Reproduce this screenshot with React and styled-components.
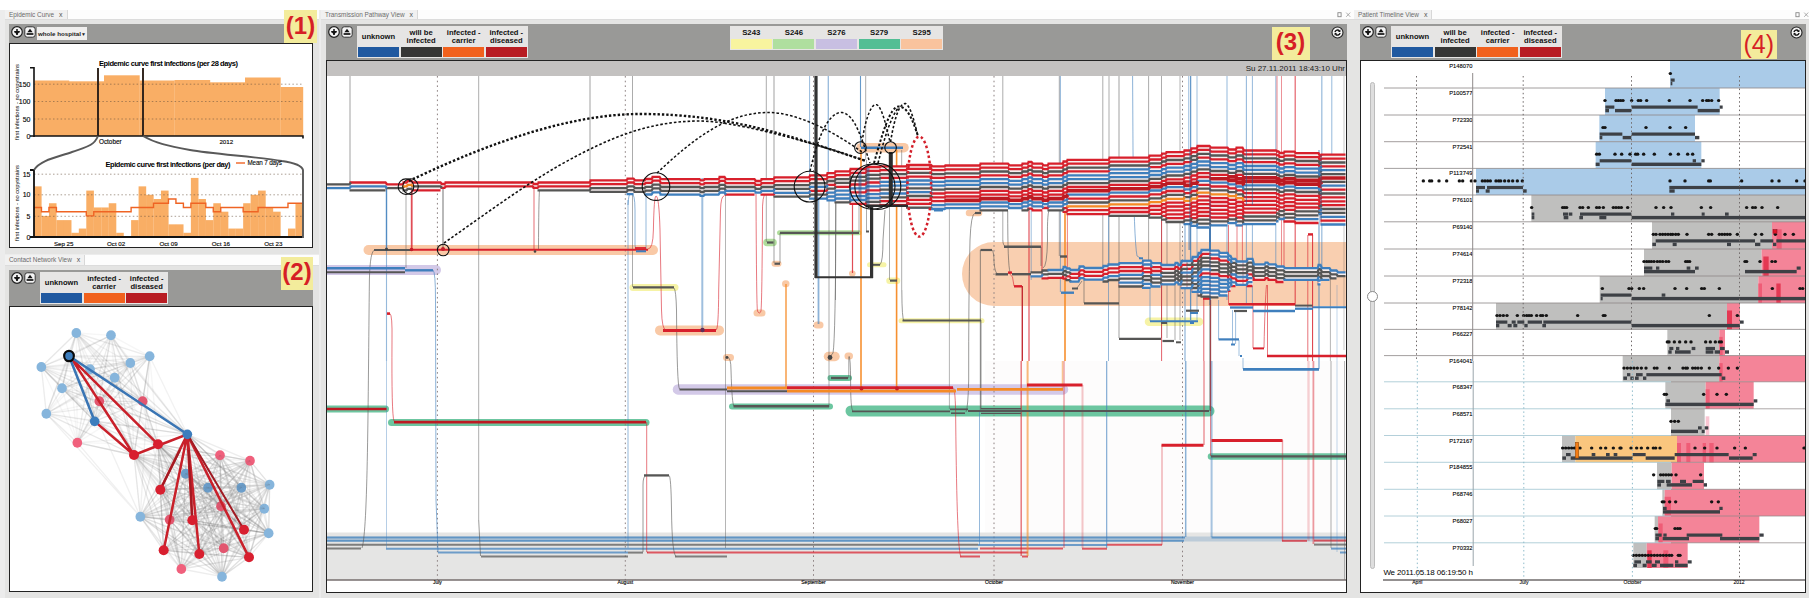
import React from "react";
import styled, { createGlobalStyle } from "styled-components";

const GlobalStyle = createGlobalStyle`
  html, body { margin: 0; padding: 0; background: #fff; overflow: hidden; }
  * { box-sizing: border-box; }
  body { font-family: "Liberation Sans", Arial, sans-serif; color: #1c1c1c; }
  svg text { font-family: "Liberation Sans", Arial, sans-serif; }
`;

const Workspace = styled.main`
  display: flex;
  gap: 2px;
  width: 1809px;
  height: 598px;
  padding: 10px 0 0 5px;
  background: linear-gradient(#fff 10px, #ececec 10px);
`;
const Column = styled.div`
  display: flex;
  flex-direction: column;
  gap: 1px;
  flex: none;
  width: ${(p) => p.$width}px;
  margin-left: ${(p) => p.$pull || 0}px;
`;
const Panel = styled.section`
  position: relative;
  display: flex;
  flex-direction: column;
  height: ${(p) => p.$height}px;
`;
const TabRow = styled.header`
  display: flex;
  justify-content: space-between;
  height: ${(p) => p.$height}px;
  background: #fdfdfd;
`;
const Tab = styled.div`
  display: flex;
  align-items: center;
  gap: 5px;
  height: 100%;
  padding: 0 4px;
  background: #f1f1f1;
  border-right: 1px solid #d8d8d8;
  color: #6b6b6b;
  font-size: 6.4px;
  line-height: 8px;
  white-space: nowrap;
`;
const TabClose = styled.span`
  color: #555;
  font-size: 7px;
`;
const WindowButtons = styled.div`
  display: flex;
  align-items: center;
  padding-right: ${(p) => p.$inset}px;
`;
const Body = styled.div`
  flex: 1;
  display: flex;
  flex-direction: column;
  padding: 5px ${(p) => p.$right}px 5px ${(p) => p.$left}px;
  background: #e4e4e3;
  border-top: 1px solid #dcdcdc;
  padding-top: 4px;
`;
const Toolbar = styled.div`
  display: flex;
  align-items: flex-start;
  height: ${(p) => p.$height}px;
  padding: ${(p) => p.$top || 2}px 3px 0 2px;
  background: #999997;
`;
const Buttons = styled.div`
  display: flex;
  gap: 1px;
`;
const Select = styled.div`
  display: flex;
  align-items: center;
  justify-content: space-between;
  width: 50px;
  height: 13px;
  margin: 1px 0 0 1px;
  padding: 0 2px 0 1px;
  background: #f0efee;
  font-weight: bold;
  font-size: 6.2px;
  white-space: nowrap;
`;
const Arrow = styled.span`
  font-size: 5px;
`;
const Legend = styled.div`
  display: flex;
  gap: 1.6px;
  height: ${(p) => p.$height}px;
  margin-left: ${(p) => p.$offset}px;
  padding: 1px 1px 1px 1px;
  background: #e6e5e4;
`;
const LegendItem = styled.div`
  display: flex;
  flex-direction: column;
  width: 41px;
`;
const LegendLabel = styled.div`
  flex: 1;
  display: flex;
  align-items: center;
  justify-content: center;
  text-align: center;
  white-space: pre-line;
  font-weight: bold;
  font-size: ${(p) => p.$size}px;
  line-height: 8.5px;
  color: #111;
`;
const Swatch = styled.div`
  height: 10px;
  background: ${(p) => p.$color};
`;
const RefreshSlot = styled.div`
  margin-left: auto;
`;
const Frame = styled.div`
  display: flex;
  flex-direction: ${(p) => p.$direction || "column"};
  height: ${(p) => p.$height}px;
  border: 1px solid #222;
  background: #fff;
`;
const Chart = styled.svg`
  display: block;
  flex: none;
`;
const TimeStrip = styled.div`
  display: flex;
  align-items: center;
  justify-content: flex-end;
  height: 15px;
  padding-right: 1px;
  background: #c3c1c0;
  font-size: 8px;
  line-height: 15px;
  color: #1a1a1a;
`;
const SliderColumn = styled.div`
  width: 22px;
  padding: 21px 0 0 9px;
`;
const Track = styled.div`
  position: relative;
  width: 5px;
  height: 487px;
  border: 1px solid #bcbcbc;
  border-radius: 3px;
  background: #dedede;
`;
const Thumb = styled.div`
  position: absolute;
  top: 208px;
  left: -4px;
  width: 11px;
  height: 11px;
  border: 1px solid #8a8a8a;
  border-radius: 50%;
  background: #fff;
`;
const Badge = styled.div`
  position: absolute;
  left: ${(p) => p.$x}px;
  top: ${(p) => p.$y}px;
  width: ${(p) => p.$w}px;
  height: ${(p) => p.$h}px;
  background: #f3ec9c;
  color: #d61f26;
  font-size: ${(p) => p.$size || 24}px;
  font-weight: ${(p) => (p.$light ? 400 : 700)};
  line-height: ${(p) => p.$h - (p.$lift || 0)}px;
  text-align: center;
  white-space: nowrap;
`;

const RoundButton = () => (
  <svg width="12" height="12" viewBox="0 0 12 12">
    <circle cx="6" cy="6" r="5.3" fill="#f4f4f4" stroke="#222" strokeWidth="1.2" />
    <path d="M6 3v6M3.2 5.8h5.6" stroke="#111" strokeWidth="1.5" />
    <path d="M3.8 6h4.4L6 9z" fill="#111" />
  </svg>
);
const ExportButton = () => (
  <svg width="12" height="12" viewBox="0 0 12 12">
    <rect x=".8" y=".8" width="10.4" height="10.4" rx="2.5" fill="#f4f4f4" stroke="#333" strokeWidth="1" />
    <path d="M6 2.8l2.6 3.5H3.4z" fill="#111" />
    <path d="M2.6 8h6.8" stroke="#111" strokeWidth="1.7" />
  </svg>
);
const RefreshButton = () => (
  <svg width="13" height="13" viewBox="0 0 13 13" style={{ display: "block" }}>
    <circle cx="6.5" cy="6.5" r="5.5" fill="#f2f2f2" stroke="#222" strokeWidth="1.1" />
    <path d="M4 6.1a2.5 2.5 0 0 1 4.4-1.2M9 7a2.5 2.5 0 0 1-4.4 1.2" fill="none" stroke="#111" strokeWidth="1.4" />
    <path d="M9.4 3.6v2.5H7zM3.6 9.4V7H6z" fill="#111" />
  </svg>
);
const WindowIcons = () => (
  <svg width="14" height="8" viewBox="0 0 14 8">
    <rect x=".9" y="1.7" width="3.2" height="4" fill="none" stroke="#888" strokeWidth=".9" />
    <path d="M9.2 1.6l4 4.2M13.2 1.6l-4 4.2" stroke="#999" strokeWidth=".8" />
  </svg>
);

const STATUS = [
  ["unknown", "#2059a0"],
  ["will be\ninfected", "#363635"],
  ["infected -\ncarrier", "#f1611d"],
  ["infected -\ndiseased", "#b81c22"],
];
const SITES = [
  ["S243", "#f8f49f"],
  ["S246", "#afdf9f"],
  ["S276", "#c8bfe2"],
  ["S279", "#52be94"],
  ["S295", "#f9c39d"],
];

const ColorLegend = ({ items, offset, height, size = 7.6 }) => (
  <Legend $offset={offset} $height={height}>
    {items.map(([label, color]) => (
      <LegendItem key={label}>
        <LegendLabel $size={size}>{label}</LegendLabel>
        <Swatch $color={color} />
      </LegendItem>
    ))}
  </Legend>
);

/* ---------- Epidemic curve ---------- */

const MONTHLY = [
  [34.5, 69, 80.5], [69, 104, 81.3], [104, 139.5, 75.3], [139.5, 174.5, 80.5],
  [174.5, 210, 80], [210, 245, 82.3], [245, 280.5, 77.5], [280.5, 303, 87],
];
const DAILY = [12, 5, 8, 4, 4, 1, 2, 11, 7, 7, 8, 1, 0, 4, 12, 10, 9, 11, 3, 3, 1, 14, 9, 4, 8, 6, 2, 2, 8, 10, 11, 7, 6, 0, 2, 8];
const MEAN = [7, 6, 7, 6, 6, 6, 6, 5, 6, 6, 6, 6, 6, 7, 7, 7, 8, 8, 9, 8, 7, 8, 8, 7, 6, 7, 7, 7, 6, 6, 7, 7, 7, 7, 8, 8];
const dayX = (i) => 34 + i * 7.47;
const dayY = (v) => 237 - v * 4.22;

const EpidemicChart = () => (
  <Chart width="302" height="203" viewBox="10 44 302 203" fontSize="7">
    {MONTHLY.map(([a, b, y]) => (
      <rect key={a} x={a} y={y} width={b - a + 0.2} height={136 - y} fill="#f9ae65" />
    ))}
    <g stroke="#6b5440" strokeWidth=".8" strokeDasharray="1.5 2.3" opacity=".7">
      <path d="M34 84.2H303M34 101.5H303M34 119H303" />
    </g>
    <path d="M30 67.8h4V137M30 136h273v2.5" fill="none" stroke="#111" strokeWidth="1.6" />
    <path d="M98 68v68M143 68v68" stroke="#2c2019" strokeWidth="1.9" />
    <text x="168.5" y="66" textAnchor="middle" fontWeight="bold" textLength="139" fontSize="7.5">Epidemic curve first infections (per 28 days)</text>
    <g textAnchor="end" stroke="#1c1c1c" strokeWidth=".15">
      <text x="30.5" y="86.5">150</text>
      <text x="30.5" y="104">100</text>
      <text x="30.5" y="121.5">50</text>
      <text x="30.5" y="138.5">0</text>
    </g>
    <text x="110.3" y="144.3" textAnchor="middle" fontSize="6.4" stroke="#1c1c1c" strokeWidth=".15">October</text>
    <text x="226.3" y="144.3" textAnchor="middle" fontSize="6.2" stroke="#1c1c1c" strokeWidth=".15">2012</text>
    <text transform="translate(18.6 102) rotate(-90)" textAnchor="middle" textLength="76" fontSize="5.8">first infections - no copystrains</text>

    {DAILY.map((v, i) => (
      <rect key={i} x={dayX(i)} y={dayY(v)} width="7.6" height={237 - dayY(v)} fill="#f9ae65" />
    ))}
    <path d="M34 174.2H303M34 194.8H303M34 216.3H303" stroke="#6b5440" strokeWidth=".8" strokeDasharray="1.5 2.3" opacity=".7" />
    <path
      d={MEAN.map((v, i) => `${i ? "V" : `M${dayX(0)} `}${dayY(v)}H${dayX(i + 1)}`).join("")}
      fill="none" stroke="#ef6424" strokeWidth="1.4"
    />
    <path d="M30 170h4V238M30 237h273" fill="none" stroke="#111" strokeWidth="1.8" />
    <path d="M98 136C94 146 86 147 72 152S40 160 34 170M143 136C155 143 168 146 190 150S260 157 282 161C296 163 302 166 303 170V238" fill="none" stroke="#595959" strokeWidth="1.9" />
    <text x="168" y="167.2" textAnchor="middle" fontWeight="bold" textLength="125" fontSize="7.4">Epidemic curve first infections (per day)</text>
    <path d="M236 163h9" stroke="#ef6424" strokeWidth="1.4" />
    <text x="247.5" y="165.3" textLength="34.5" fontSize="6.3" stroke="#1c1c1c" strokeWidth=".1">Mean 7 days</text>
    <g textAnchor="end" stroke="#1c1c1c" strokeWidth=".15">
      <text x="30.5" y="176.8">15</text>
      <text x="30.5" y="197.3">10</text>
      <text x="30.5" y="218.8">5</text>
      <text x="30.5" y="239.5">0</text>
    </g>
    <text transform="translate(18.6 203) rotate(-90)" textAnchor="middle" textLength="76" fontSize="5.8">first infections - no copystrains</text>
    <g textAnchor="middle" fontSize="6.2" stroke="#1c1c1c" strokeWidth=".15">
      {["Sep 25", "Oct 02", "Oct 09", "Oct 16", "Oct 23"].map((t, i) => (
        <text key={t} x={63.7 + i * 52.4} y="246">{t}</text>
      ))}
    </g>
  </Chart>
);

/* ---------- Contact network (chart units are thirds of a pixel) ---------- */

const WARD_A = [[229, 249], [333, 256], [207, 318], [449, 319], [124, 351], [270, 358], [391, 339], [344, 383], [186, 415], [298, 454], [428, 454], [139, 491], [284, 514], [232, 578], [402, 615], [474, 583], [562, 553]];
const WARD_B = [[562, 553], [557, 671], [481, 719], [624, 713], [724, 713], [660, 616], [750, 632], [809, 704], [793, 776], [663, 769], [509, 809], [577, 811], [421, 800], [732, 839], [806, 850], [491, 901], [598, 912], [671, 895], [747, 922], [544, 957], [666, 980], [402, 615], [474, 583]];
const NODE_COLORS = {
  lightBlue: ["#86b5dc", [[229, 249], [333, 256], [449, 319], [124, 351], [186, 415], [139, 491], [421, 800], [809, 704], [793, 776], [806, 850], [666, 980], [270, 358], [391, 339], [344, 383]]],
  midBlue: ["#6b9ecb", [[557, 671], [624, 713], [724, 713]]],
  pink: ["#f0607c", [[232, 578], [660, 616], [750, 632], [544, 957]]],
  midPink: ["#e2566f", [[298, 454], [428, 454], [663, 769], [509, 809], [671, 895]]],
};
const meshPath = (nodes) => {
  let d = "";
  nodes.forEach((a, i) => nodes.slice(i + 1).forEach((b) => { d += `M${a[0]} ${a[1]}L${b[0]} ${b[1]}`; }));
  return d;
};
const meshLines = (nodes, op) =>
  nodes.flatMap((a, i) => nodes.slice(i + 1).map((b, j) => (
    <path key={`${i}-${j}`} d={`M${a[0]} ${a[1]}L${b[0]} ${b[1]}`} opacity={op * (1 + ((i * 7 + j * 5) % 4) * 0.6)} />
  )));

const NetworkChart = () => (
  <Chart width="302" height="284" viewBox="10 307 302 284">
    <g transform="translate(0 250) scale(.33333)" fill="none">
      <g stroke="#555" strokeWidth="4">
        {meshLines(WARD_A, 0.05)}
        {meshLines(WARD_B, 0.065)}
        <path opacity=".09" d="M232 578L421 800M232 578L402 615M139 491L421 800M449 319L421 800M402 615L421 800M207 318L421 800M284 514L557 671M428 454L509 809M298 454L481 719" />
      </g>
      <path d={meshPath(WARD_B.slice(1, 12))} stroke="#fff" strokeWidth="1.5" opacity=".35" />
      {Object.values(NODE_COLORS).map(([color, nodes]) => (
        <g key={color} fill={color}>
          {nodes.map(([x, y]) => <ellipse key={x} cx={x} cy={y} rx="14.5" ry="15" />)}
        </g>
      ))}
      <path d={meshPath(WARD_B.slice(1, 12))} stroke="#555" strokeWidth="3" opacity=".06" />
      <g stroke="#c9202a" strokeWidth="7.5">
        <path d="M214 325L402 615M214 325L474 583M284 514L402 615L562 553L481 719M562 553L491 901M562 553L577 811M562 553L598 912M562 553L747 922" />
        <path d="M562 553L732 839M566 600L577 811M540 600L481 719" stroke="#a11a22" strokeWidth="6" />
      </g>
      <path d="M207 318L284 514M207 318L562 553" stroke="#3a75b4" strokeWidth="7.5" />
      <g fill="#d81f2f">
        {[[402, 615], [474, 583], [481, 719], [577, 811], [732, 839], [491, 901], [598, 912], [747, 922]].map(([x, y]) => (
          <ellipse key={x} cx={x} cy={y} rx="15" ry="15" />
        ))}
      </g>
      <g fill="#3c7dbd">
        <circle cx="284" cy="514" r="14.5" />
        <circle cx="562" cy="553" r="14.5" />
        <ellipse cx="207" cy="318" rx="14.5" ry="15.5" stroke="#0a0a0a" strokeWidth="6.5" />
      </g>
    </g>
  </Chart>
);

/* ---------- Transmission pathways ---------- */

const INK = { r: "#d8202c", k: "#565655", b: "#3f7fbd", o: "#f58a25", d: "#bd1a22" };
const STEP = 3.88;

const MAIN_STREAM = [
  [326, 350, 184.3, "kb"], [350, 386, 182.5, "rbk"], [386, 403, 184.3, "rk"], [403, 407, 182.5, "rok"],
  [407, 412, 181, "rok"], [412, 441, 182.5, "rkr"], [441, 445, 184, "rr"], [445, 533, 182.5, "rr"],
  [533, 538, 184, "rr"], [538, 590, 182.5, "rrk"], [590, 627, 180.3, "rrkk"], [627, 634, 178.6, "rrkkb"],
  [634, 645, 180.3, "rrkk"], [645, 652, 179, "rrkkb"], [652, 660, 176.8, "rrkkb"], [660, 700, 179.2, "rrkkb"],
  [700, 704, 180.4, "rrkkb"], [704, 719, 179.2, "rrkkb"], [719, 725, 177, "rrkkb"], [725, 755, 179.2, "rrkbr"],
  [755, 761, 181, "rrkb"], [761, 774, 179.2, "rrkbr"], [774, 809.5, 177.3, "rrkkbk"], [809.5, 827, 175.3, "rrkbrkb"],
  [827, 835, 173.2, "rrkrkbbb"], [835, 850, 171.3, "rrkkrbbbk"], [850, 866, 169, "rrkkrbrbbr"],
  [866, 880, 167, "rrkkrbrbbkr"], [880, 906.5, 166.3, "rrkrbbkbkrr"], [906.5, 931.5, 165, "rrkrbbkbkrrk"],
  [931.5, 945, 166.3, "rrkrbbkrrrbb"], [945, 980, 165.5, "rrkrbbkrrdbb"], [980, 1008.5, 163.7, "rrkrbbkrrdbbk"],
  [1008.5, 1022, 165.3, "rrkrbbkrrdbb"], [1022, 1028, 163.7, "rrkrbbkrrdbbk"], [1028, 1032, 162, "rrkrbbkrrdbbr"],
  [1032, 1042.5, 163.7, "rrkrbbkrrdbbr"], [1042.5, 1048, 165.3, "rrkrbbkrrdbr"], [1048, 1063, 163.7, "rrkrbbkrrdbbk"],
  [1063, 1067, 161.5, "rrkrbbkrrdbbrr"], [1067, 1109, 159.8, "rrkrbbkrdbrkorr"], [1109, 1149, 157.7, "rrkbbbkrdbrkorrk"],
  [1149, 1161.5, 155.6, "rrkrbbkrdbrkorrrk"], [1161.5, 1166, 153.7, "rrkrbbkrdbrkorrrrk"],
  [1166, 1184, 152.2, "rrkrbbkrdbrkorrrrrk"], [1184, 1191, 150.5, "rrkrbbkrrdbrkorrrrkb"],
  [1191, 1197, 148.3, "rrkkbbkrrdbrkorrrrrkb"], [1197, 1210, 146, "rrkrbbkrrbrkorrrrrrkkb"],
  [1210, 1228, 147.7, "rrkrbbkrdbrkorrrrrrkb"], [1228, 1236, 149.5, "rrkrbbkddbrkorrrrrkb"],
  [1236, 1243, 147.7, "rrkrbbkrddbrkorrrrrkb"], [1243, 1276.5, 150.5, "rrkrbbkddbkrrrrrrkkb"],
  [1276.5, 1279, 151.5, "rrkrbbkddbkrrrrrkkb"], [1279, 1284, 153, "rrkrbbkddbkrrrrkkb"],
  [1284, 1295, 151.7, "rrkrbbkddbkrrrrrkkr"], [1295, 1319, 153.2, "rrkrbbkddbkrrrrkkbr"],
  [1319, 1321, 156, "rrkbkkddrkrrrkbb"], [1321, 1346, 154.7, "rrkrbkdkbrkrrrkkbrb"],
];
const WARD_STREAM = [
  [1031, 1042, 272.4, "kb"], [1042, 1048, 270.5, "kkr"], [1048, 1063, 270, "bkr"], [1063, 1066, 267, "bkkr"],
  [1066, 1070, 268.5, "bkrk"], [1070, 1079, 270, "brrb"], [1079, 1084, 266.5, "brrb"], [1084, 1103, 268, "brrb"],
  [1103, 1108, 266, "brrbk"], [1108, 1119, 264.5, "brrbk"], [1119, 1142.5, 263.2, "brrbkbk"],
  [1142.5, 1151, 260.6, "bbrrkkbb"], [1151, 1161, 263.2, "brrbkkb"], [1161, 1175, 265, "brkkkb"],
  [1175, 1178, 263, "brkkkb"], [1178, 1181, 265, "brkkkb"], [1181, 1187, 261, "brkbkkkb"], [1187, 1192, 261, "bkrbkkkb"],
  [1192, 1198, 257, "brkkkbbkkb"], [1198, 1201, 253, "brkkkbrbbbbk"], [1201, 1210, 250, "brkkkbrbbbbbk"],
  [1210, 1219, 250.7, "bbrkkkrbbbbbk"], [1219, 1228, 252.8, "bbrkkkrbbbbb"], [1228, 1231, 256, "bbkkkrbbbr"],
  [1231, 1236, 259, "bkkkbrbr"], [1236, 1243, 261.5, "bkkkbrb"], [1243, 1247, 261.5, "bkkkbrb"], [1247, 1253, 258.8, "bkkkrbbr"],
  [1253, 1265, 264.3, "bkkkr"], [1265, 1268, 262.6, "bkkkr"], [1268, 1276, 264.3, "bkkkr"], [1276, 1284, 266.5, "bkkkr"],
  [1284, 1318, 268.2, "bkkb"], [1318, 1321, 265, "bkkkbb"], [1321, 1330, 268.2, "bkkb"], [1330, 1337, 270.5, "bkk"], [1337, 1346, 272.3, "bk"],
];

const Stream = ({ segments }) => {
  const ink = { r: [], k: [], b: [], o: [], d: [] };
  segments.forEach(([x0, x1, top, colors], s) => {
    const next = segments[s + 1];
    [...colors].forEach((c, i) => {
      const y = top + i * STEP;
      let d = `M${x0 - 0.5} ${y.toFixed(1)}H${x1 - 0.5}`;
      if (next && i < next[3].length) d += `L${x1 + 1} ${(next[2] + i * STEP).toFixed(1)}`;
      ink[c].push(d);
    });
  });
  const joins = segments.slice(1).filter((s) => s[3].length > 5).map((s) => `M${s[0]} ${s[2]}V${s[2] + (s[3].length - 1) * STEP}`).join("");
  return (
    <g fill="none">
      {segments.map(([x0, x1, top, c]) => (
        <rect key={x0} x={x0} y={top} width={x1 - x0} height={(c.length - 1) * STEP} fill="#f6eeee" />
      ))}
      <path d={joins} stroke="#8c2c40" strokeWidth=".9" opacity=".6" />
      {Object.keys(ink).map((c) => (
        <path key={c} d={ink[c].join("")} stroke={INK[c]} strokeWidth={c === "d" ? 3.6 : 2.3} />
      ))}
    </g>
  );
};

const HALO = { orange: "#f9c9a6", purple: "#d3c9e8", yellow: "#f6f3a6", lime: "#b0dd9c", green: "#6cc6a0" };
const HALOS = [
  ["orange", 368.5, 653, 250, 10], ["purple", 327, 436, 270, 10], ["yellow", 633, 675, 287.5, 7],
  ["green", 327, 385.5, 409, 7], ["green", 391.5, 646, 422.4, 7], ["lime", 767, 773, 242.5, 7.5],
  ["lime", 779.5, 859, 232.7, 5], ["orange", 774.5, 778.5, 263.7, 6], ["orange", 785.5, 786, 283.7, 7],
  ["orange", 852, 852.6, 273.4, 6], ["yellow", 869.5, 884, 264.8, 5], ["yellow", 889.5, 897, 280.7, 6.5],
  ["orange", 861, 904, 147.7, 9.5], ["orange", 969, 979, 213, 6.5], ["orange", 660, 719, 330.4, 10],
  ["orange", 757, 762, 313, 7], ["orange", 817, 820, 325, 7], ["orange", 726.5, 730.5, 357.4, 7],
  ["orange", 828.5, 835, 356.5, 9.5], ["orange", 848, 849.5, 356, 7], ["yellow", 901, 982, 320.7, 5],
  ["green", 830.5, 849, 378, 6], ["purple", 678, 1063, 389.4, 10.5], ["green", 732, 830, 406.4, 6],
  ["green", 851, 1209, 411, 11], ["yellow", 1149, 1199, 321.8, 8.5], ["green", 1211, 1347, 456.4, 6.5],
];
/* ink, from x, to x, y, thickness */
const STAYS = [
  ["b", 327, 405, 268.2, 2.4], ["k", 327, 405, 272.3, 2], ["b", 405, 433, 270.3, 2.4],
  ["k", 374, 412, 250, 1.8], ["r", 411, 648, 249.7, 1.9], ["r", 635, 646, 248, 1.8], ["b", 636, 646, 251.3, 2],
  ["k", 633, 674, 287.4, 2.2], ["d", 327, 386.5, 409, 2.7], ["d", 394, 646, 422.2, 2.7], ["r", 387, 390, 313.6, 2.6],
  ["k", 644, 669, 475.4, 2.3], ["k", 767, 773.5, 242.5, 2.2], ["k", 780, 859, 232.8, 2.3], ["k", 774.5, 780, 263.7, 2.2],
  ["k", 872, 880, 264.8, 2], ["k", 890, 897, 280.6, 2.2], ["b", 861, 903, 147.8, 2.6], ["k", 975, 981, 213, 2.2],
  ["r", 663, 716, 330.6, 3], ["k", 902.5, 981, 320.6, 2], ["k", 831, 848, 378, 2.4], ["k", 679.5, 727, 389.5, 1.9],
  ["o", 727, 787, 388, 2.8], ["k", 727, 787, 391.2, 2], ["o", 787, 956, 391, 3], ["r", 787, 953, 387.6, 2.9],
  ["o", 957, 1063, 389.4, 2.6], ["r", 1027, 1082.5, 385, 3.2], ["k", 733.5, 829, 406.3, 2.6], ["k", 852, 950, 411.3, 1.8],
  ["k", 950, 968, 409.3, 1.8], ["k", 951, 965, 413.2, 1.6], ["k", 968, 1209, 411, 2], ["k", 981, 1021, 408.8, 1.4], ["k", 981, 1021, 413.4, 1.4],
  ["k", 1211, 1347, 456.4, 2.4], ["r", 1161.5, 1203.5, 445.2, 3], ["r", 1211.5, 1282.5, 440.4, 3],
  ["r", 1267, 1346, 356, 2.4], ["b", 1243, 1319, 369.4, 2.6], ["b", 1218.5, 1239, 339.4, 2.2], ["k", 1084, 1119, 303.4, 2.2],
  ["k", 1119, 1161, 338.8, 2.2], ["k", 1162.5, 1174, 341, 2.2], ["k", 1176, 1181, 342.3, 2], ["r", 1229, 1295, 304.3, 2.6],
  ["k", 1295, 1312.5, 305.6, 2], ["b", 1253, 1295, 311, 2.3], ["b", 1230, 1253, 307.5, 2.3], ["b", 1295, 1313, 308.7, 2.3], ["b", 1313, 1346, 307.2, 2],
  ["k", 1234, 1247, 311, 2.2], ["r", 1253, 1264, 348.4, 2], ["k", 1004, 1041, 246.7, 2.4], ["k", 980.5, 992, 250, 2.2],
  ["k", 995.5, 1008, 274.3, 2.4], ["r", 1008, 1012, 272.6, 2.4], ["k", 1012, 1031, 274.2, 2.4], ["r", 1014, 1022, 286.3, 2.4],
  ["k", 1060, 1067, 256.5, 2.4], ["b", 1061, 1074, 292.7, 2.4], ["k", 1072, 1078, 288.5, 2], ["b", 1150, 1198, 321.2, 2],
  ["k", 1161, 1167, 323, 2], ["b", 1190, 1194, 323, 2], ["b", 1139, 1143, 258.3, 2], ["k", 1186, 1199, 310.7, 2.2], ["b", 1190, 1198, 313, 2],
  ["r", 1237, 1243, 225, 2.4], ["r", 1308, 1313, 234.4, 2.4], ["b", 1241, 1247, 208.3, 2.2], ["k", 906, 931, 203.8, 4], ["b", 910, 931, 207.7, 2],
  ["b", 934, 943, 210.5, 2], ["r", 1203, 1210, 298.5, 2.6], ["k", 866, 869, 231.5, 2], ["b", 1231, 1235, 344.5, 2], ["b", 1240, 1242, 356, 2],
];
const HOME_LANES = [
  ["b", 327, 1185, 537.5], ["b", 327, 1184, 540.7], ["k", 327, 978, 544.7], ["b", 978, 1107, 544.9], ["r", 1107, 1162, 544.7],
  ["k", 327, 361, 548.6], ["b", 386, 978, 548.7], ["r", 980, 1063, 548.6], ["r", 1082, 1107, 548.7], ["b", 438, 628, 552.6],
  ["k", 628, 643, 552.6], ["r", 647, 978, 552.6], ["r", 978, 1028, 552.6], ["k", 481, 628, 556.6], ["k", 675, 727, 556.6],
  ["r", 960, 980, 556.5], ["r", 1022, 1028, 556.5], ["b", 1211.5, 1346, 537.5], ["r", 1282, 1307, 540.8], ["r", 1314, 1346, 540.6],
  ["k", 1314, 1346, 544.6], ["b", 1331, 1346, 548.6], ["b", 1340, 1346, 552.5],
];
/* ink, x, from y, to y, thickness, opacity */
const MOVES = [
  ["k", 350, 76, 183, 1], ["k", 478.7, 76, 520, 0.9], ["k", 590, 76, 192, 1], ["k", 632.5, 76, 287, 0.9],
  ["b", 386.5, 187, 250, 1.4, 0.9], ["b", 386.5, 250, 361, 1.1], ["b", 386.5, 361, 548, 0.7], ["k", 406, 190, 268, 0.9], ["r", 411.7, 190, 249, 1.8, 0.8],
  ["k", 443, 188, 248, 1.5], ["r", 534, 186, 250, 1.2], ["b", 646, 193, 250, 1],
  ["b", 628, 200, 548, 1], ["k", 725.5, 195, 548, 0.8], ["k", 766.3, 76, 242, 0.9], ["k", 774, 76, 263, 1], ["k", 780, 233, 263, 1],
  ["b", 809.6, 76, 176, 1], ["b", 828.3, 76, 172, 1.3], ["k", 829, 172, 407, 0.9], ["b", 702.3, 178, 330, 2, 0.5], ["o", 786, 284, 389, 1.4, 0.9],
  ["b", 818.5, 178, 324, 1.8, 0.6], ["k", 835.5, 202, 300, 0.9], ["r", 852.5, 204, 273, 1.2, 0.8], ["k", 859, 200, 232, 0.9],
  ["b", 860.5, 76, 147, 1.1, 0.8], ["k", 865.7, 76, 160, 0.9], ["o", 861, 150, 389, 1.6, 0.95], ["o", 896.6, 150, 389, 1.6, 0.95],
  ["k", 889.5, 205, 280, 0.9], ["k", 901.7, 150, 290, 0.9], ["k", 866.5, 160, 231, 0.9], ["k", 949.4, 76, 409, 0.8], ["k", 980.4, 250, 411, 1.2],
  ["b", 979.5, 411, 545, 1], ["k", 848.8, 357, 378, 1], ["k", 1002.8, 76, 240, 0.9], ["k", 1059.3, 76, 256, 0.9], ["b", 1060.4, 76, 292, 1.1],
  ["k", 1102.8, 76, 270, 0.9], ["k", 1109, 76, 268, 0.9], ["k", 1119, 76, 338, 1], ["k", 1148.6, 76, 265, 0.9], ["k", 1161.5, 76, 338, 0.9],
  ["k", 1180, 76, 340, 0.8], ["b", 1188.7, 76, 250, 0.9], ["b", 1190.6, 76, 320, 1.3, 0.8], ["b", 1197, 76, 320, 1, 0.5], ["b", 1227, 76, 300, 1],
  ["b", 1246.4, 76, 305, 1.1], ["b", 1252.4, 76, 305, 1], ["b", 1275.8, 76, 270, 1], ["r", 1277, 76, 150, 1], ["r", 1281.5, 76, 280, 0.9],
  ["r", 1295.2, 76, 305, 1.2, 0.7], ["b", 1321.8, 76, 280, 1.3, 0.5], ["b", 1331.8, 76, 180, 1], ["k", 1344, 76, 350, 0.6],
  ["d", 1022.3, 286, 361, 1.4, 0.9], ["r", 1021.2, 361, 556, 1.5, 0.6], ["r", 1029, 204, 361, 1.3, 0.7], ["o", 1027.6, 361, 556, 2, 0.6],
  ["b", 1031.2, 208, 280, 1, 0.5], ["r", 1042, 204, 275, 1.2, 0.7], ["o", 1065, 205, 361, 1.7, 0.9], ["r", 1067.4, 210, 280, 1],
  ["r", 1064, 361, 548, 1.5, 0.4], ["o", 1062.5, 361, 388, 1.5, 0.5], ["k", 1084, 280, 303, 1], ["b", 1108.5, 216, 361, 1], ["b", 1106.7, 361, 548, 1.1, 0.7],
  ["r", 1082.5, 385, 548, 2, 0.25], ["b", 1150, 285, 321, 1], ["r", 1161.6, 218, 361, 1, 0.7], ["k", 1167, 220, 338, 0.9], ["k", 1175, 265, 340, 0.9],
  ["b", 1185, 220, 361, 2, 0.35], ["b", 1185.7, 361, 537, 1.5, 0.6], ["r", 1162, 445, 545, 2, 0.25], ["r", 1203.8, 298, 361, 1, 0.7], ["r", 1204, 361, 445, 2, 0.35],
  ["b", 1210, 150, 300, 2, 0.9], ["k", 1210.3, 300, 411, 1.6, 0.9], ["b", 1211.6, 361, 537, 2, 0.45], ["r", 1210.6, 300, 456, 0.9, 0.6],
  ["b", 1218.6, 300, 339, 1], ["b", 1239, 340, 356, 0.9], ["b", 1243, 358, 369, 0.9], ["r", 1228.5, 225, 305, 1, 0.6], ["r", 1237, 226, 270, 1],
  ["r", 1242.4, 226, 270, 1], ["r", 1253, 305, 348, 1, 0.6], ["r", 1267.5, 285, 356, 1, 0.6], ["r", 1282.5, 440, 541, 1.4, 0.4],
  ["r", 1284, 220, 280, 1, 0.6], ["r", 1307.8, 235, 361, 0.9, 0.7], ["r", 1308.5, 361, 541, 2.4, 0.2], ["r", 1312.6, 235, 361, 1, 0.9],
  ["r", 1313.4, 361, 544, 1.8, 0.45], ["b", 1319, 150, 369, 1.4, 0.6], ["k", 1330.4, 275, 361, 0.8], ["k", 1331, 361, 548, 1.2, 0.4],
  ["b", 1337, 285, 552, 0.8, 0.4], ["k", 1344.5, 361, 580, 1, 0.4], ["b", 1232.5, 310, 344, 0.9], ["b", 1235.6, 310, 344, 0.9],
];
const CURVED_MOVES = [
  ["k", "M375 250Q370 250 369.4 280C368 400 368 530 362 548"], ["b", "M433 270Q435.5 272 435.5 300L436 500L438 552"],
  ["r", "M390 313.6Q392.4 315 392 340Q391.5 415 394 421"], ["k", "M478.7 520L480.5 556"], ["k", "M538.5 249Q538.7 200 539.5 190"],
  ["b", "M628 205Q628.5 193 631 193Q635 193 635 210V245Q635 250 640 250"], ["r", "M648 249Q653 249 653.4 230Q654 196 656 196Q659 196 660 230L661.5 310Q662 330 666 330"],
  ["r", "M716 330Q718.5 330 718.7 290L720.5 210Q721 196 724 196"], ["r", "M756 194Q756.5 310 757.5 311Q759.5 315 761 311Q762 300 762.5 215Q762 195 766 193"],
  ["k", "M674 288Q676 290 676.5 310Q677 386 679.5 389"], ["k", "M727 357Q731 357 731 370Q732 405 734 406"], ["k", "M836 202Q835.5 340 833 353L829 358"],
  ["k", "M849 356Q850.5 358 850.6 380Q850.6 410 853 411"], ["k", "M880 264.7Q883 262 883 240L885 210"], ["k", "M901.8 290Q902 320 904 320.6"],
  ["k", "M975 213Q971 214 970 240Q968.5 300 968.7 380Q968 408 966 412"], ["k", "M981 320V409"], ["k", "M992 250Q994 252 994 262Q995 274 998 274"],
  ["k", "M1002.8 240Q1003 246 1006 246.7M1041 247V266"], ["k", "M1007.7 211Q1007.7 265 1010 272"], ["k", "M1050 209Q1047 210 1047.5 240Q1047 267 1043 268"],
  ["b", "M1132.6 76L1133 150Q1134 240 1137 256L1141 258.4"], ["r", "M646.7 422V552L648 552.6"], ["k", "M643 552V485Q643 476 646 475.5M669 475.5Q671 476 671.5 510Q672 553 676 556.5"],
  ["r", "M953 387.5Q955.5 388 955.7 420Q957 553 961 556.5"], ["r", "M1008 272L1012.5 277L1014 286"], ["r", "M1264 348Q1265 300 1266.5 285"], ["k", "M1077 288L1082 281"],
];
const ARCS = [
  [2.4, "M409 181C470 152 560 114 640 114C730 114 790 136 866 161"],
  [1.6, "M444 243C480 218 520 188 560 165C610 137 650 121 700 121C730 121 800 138 866 161"],
  [1.5, "M657 173C690 142 725 113 767 112.5C800 112 840 136 862 152"],
  [1.5, "M810 171C815 150 825 112 842 112.5C855 114 862 140 870 163"],
  [1.5, "M862 142C866 115 872 104 876 104.5C882 105 887 130 890 142"],
  [2, "M874 163C882 135 890 106 899 106.5C909 107 914 125 918 136"],
  [1.6, "M890.5 142C895 115 900 103 905.5 103.5C911 106 915 125 918 136"],
  [1.6, "M878 163C884 140 890 118 899 107"],
];
const CIRCLES = [[406, 186.7, 7.8], [410.5, 186.6, 7.8], [443.2, 250, 5.8], [656, 186.6, 13.8], [809.6, 186.6, 15.4], [872.4, 186.6, 22.6], [877.8, 186.4, 23], [860.4, 147.6, 5.8], [890.6, 147.6, 5.8]];
const MONTHS = [["July", 437.4], ["August", 625.3], ["September", 813.5], ["October", 994], ["November", 1182.5]];

const PathwayChart = () => (
  <Chart width="1019" height="516" viewBox="327 76 1019 516">
    <rect x="985" y="361" width="362" height="172" fill="#fdfcfc" />
    <rect x="962" y="242" width="420" height="64" rx="32" fill="#f9cfb0" />
    <rect x="326" y="532.5" width="1021" height="47.5" fill="#e5e5e4" />
    <rect x="326" y="536.5" width="1021" height="5" fill="#bccbd8" />
    {HALOS.map(([c, a, b, y, w], i) => (
      <path key={i} d={`M${a} ${y}H${b}`} stroke={HALO[c]} strokeWidth={w} strokeLinecap="round" />
    ))}
    <g stroke="#8c8080" strokeDasharray="1.6 3.1">
      {MONTHS.map(([m, x]) => <path key={m} d={`M${x} 76V580`} />)}
    </g>
    <g fill="none">
      {HOME_LANES.map(([c, a, b, y], i) => (
        <path key={i} d={`M${a} ${y}H${b}`} stroke={INK[c]} strokeWidth="2" opacity=".72" />
      ))}
      {MOVES.map(([c, x, a, b, w, o = 0.55], i) => (
        <path key={i} d={`M${x} ${a}V${b}`} stroke={INK[c]} strokeWidth={w} opacity={o} />
      ))}
      {CURVED_MOVES.map(([c, d], i) => (
        <path key={i} d={d} stroke={INK[c]} strokeWidth="1" opacity=".6" />
      ))}
      {STAYS.map(([c, a, b, y, w], i) => (
        <path key={i} d={`M${a} ${y}H${b}`} stroke={INK[c]} strokeWidth={w} />
      ))}
    </g>
    <Stream segments={MAIN_STREAM} />
    <Stream segments={WARD_STREAM} />
    <g fill="none" stroke="#31598e" opacity=".55">
      <path d="M1189.8 150V250M1246.4 150V205M1252.4 150V205M1210 148V305M1321 155V220" strokeWidth="1.1" />
      <path d="M868 168V205M860 172V200" strokeWidth="3" />
    </g>
    <path d="M816 76V277.2H872V206" fill="none" stroke="#333" strokeWidth="2" />
    <path d="M816 76V278M871.6 278V205" stroke="#333" strokeWidth="3.2" />
    <path d="M890.8 152V206" stroke="#2c2c2c" strokeWidth="4" />
    <path d="M866 205.7H908" stroke="#2c2c2c" strokeWidth="2.4" />
    <g fill="#c41c28">
      <circle cx="411.5" cy="249.5" r="1.8" /><circle cx="443" cy="249" r="2" /><circle cx="861.5" cy="388.5" r="2" /><circle cx="897" cy="388.5" r="2" />
    </g>
    <g fill="#444">
      <circle cx="386.5" cy="249" r="1.5" /><circle cx="535" cy="251.5" r="1.3" /><circle cx="727" cy="357.5" r="1.4" /><circle cx="830" cy="357.5" r="2.4" /><circle cx="702.5" cy="330" r="2.2" fill="#603058" />
    </g>
    <g fill="none" stroke="#111">
      {ARCS.map(([w, d], i) => <path key={i} d={d} strokeWidth={w} strokeDasharray={`${w > 1.9 ? 2.4 : 2.6} 2`} />)}
      {CIRCLES.map(([x, y, r], i) => <circle key={i} cx={x} cy={y} r={r} strokeWidth="1.1" />)}
    </g>
    <ellipse cx="919.3" cy="186.6" rx="11.8" ry="50" fill="none" stroke="#d3202b" strokeWidth="2.5" strokeDasharray="2.6 2.6" />
    <path d="M326 580H1347" stroke="#766e6e" strokeWidth="1.4" />
    <g fontSize="5" textAnchor="middle" stroke="#1c1c1c" strokeWidth=".15">
      {MONTHS.map(([m, x]) => <text key={m} x={x} y="584.4">{m}</text>)}
    </g>
  </Chart>
);

/* ---------- Patient timelines (x values are thirds of a pixel from 1350) ---------- */

const AREA = { b: "#aacbe8", g: "#bfbfbe", p: "#f48498", o: "#fac67e", d: "#ed5570", x: "#e02a46", l: "#f9bccb" };
/* label, top, areas, marks, dots, bars in the upper lane, bars in the lower lane */
const PATIENTS = [
  ["P148070", 61, "b960-1366", "", "961", "962-974", "962-967"],
  ["P100577", 88, "b765-1109", "", "765 798 805 812 819 845 865 872 890 958 1020 1058 1070 1076 1085 1106", "766-793 845-1043 1109-1118", "766-777 795-844 1043-1109"],
  ["P72330", 115, "b748-1035", "", "759 765 888 960 1007", "749-817 845-1035", "749-757 818-844 1035-1048"],
  ["P72541", 141.7, "b737-1054", "", "740 748 795 815 840 857 863 881 913 961 985 1013 1028", "749-844 1028-1038 1054-1064", "737-749 845-1054"],
  ["P113749", 168.4, "b378-1366", "", "220 239 245 267 290 328 338 364 375 397 405 413 421 438 446 452 464 476 488 502 517 960 1005 1076 1081 1175 1266 1287 1340 1365", "378-405 411-519 958-1366", "378-387 407-419 519-530 958-974"],
  ["P76101", 195, "g544-1366", "", "545 638 644 650 690 698 715 740 748 760 790 798 806 814 833 918 941 963 1054 1082 1190 1208 1216 1236 1283", "545-553 639-655 657-667 690-844 963-973 1055-1064 1125-1136", "545-553 641-655 688-699 748-769 845-1366"],
  ["P69140", 221.8, "g906-1266 p1266-1366", "d1280-1295", "910 918 930 938 946 954 962 968 977 985 1011 1076 1085 1108 1116 1124 1132 1140 1162 1216 1235 1276 1305 1330", "917-1215 1231-1270 1279-1366", "907-918 968-980 1131-1143 1215-1231 1269-1279"],
  ["P74614", 249, "g882-1235 p1235-1366", "x1240-1256", "882 890 897 904 912 922 930 938 948 956 1007 1013 1019 1185 1190 1230 1266 1276", "882-907 918-928 1010-1021 1035-1046 1340-1352", "882-1035 1185-1340"],
  ["P72318", 276, "g749-1225 p1225-1366", "d1225-1236 x1279-1292", "757 837 845 868 881 975 1010 1055 1063 1108 1267 1350 1358", "752-844 935-946", "752-758 845-1366"],
  ["P78142", 303, "g438-1131 p1131-1170", "x1131-1146", "441 450 460 471 502 521 530 537 544 560 572 578 589 683 760 765 1078 1162", "438-472 485-497 502-523 533-576 580-844 1170-1181", "438-448 473-485 490-502 523-533 577-588 845-1170"],
  ["P66227", 329.4, "g952-1108 p1108-1125", "d1108-1118", "952 957 973 989 1007 1023 1067 1081 1096 1108 1114", "958-970 978-988 1025-1036 1067-1095 1110-1124", "955-965 975-1022 1067-1090 1094-1110 1125-1137"],
  ["P164041", 355.6, "g818-1108 p1108-1366", "d1108-1118", "822 832 842 852 862 874 888 913 921 958 999 1007 1012 1028 1036 1044 1054 1078 1106 1135 1162", "831-841 858-878 889-1115", "820-831 841-851 855-866 879-889 1115-1126"],
  ["P68347", 381.8, "g946-1067 p1067-1211", "d1067-1079", "943 949 1061 1101 1129", "949-960 1211-1222", "946-1211"],
  ["P68571", 408.8, "g963-1064", "l1067-1078", "963 974 985", "1044-1055 1064-1075", "963-1044 1055-1064"],
  ["P172167", 435.5, "g636-676 o676-981 p981-1366", "d981-993 d1009-1021 d1058-1068 d1078-1091", "638 647 656 665 673 690 725 752 767 790 810 813 843 860 874 893 910 917 930 1035 1064 1101 1154 1186 1362", "648-662 725-736 768-779 791-802 848-887 974-1136 1208-1220", "637-648 662-848 887-974 1137-1208"],
  ["P184855", 462.3, "g921-965 p965-1062", "", "911 932 940 948 956 964 978 1052", "922-943 948-962 990-1008 1028-1061", "922-933 950-1026 1061-1071"],
  ["P68746", 489.3, "g937-944 p944-1366", "d944-963", "937 942 959 977 1085 1105", "939-950 1108-1118", "939-1110"],
  ["P68027", 516, "g914-924 p924-1228", "d926-938", "916 920 975 983 990", "916-935 940-950 1010-1117 1228-1241", "916-927 938-1017 1110-1228"],
  ["P70332", 542.8, "g850-890 p890-1013", "x892-905 d940-955", "850 859 868 877 886 895 904 913 922 931 940 949 958 965 985 990", "853-873 888-905 915-930 975-985 1013-1025", "850-861 878-890 905-920 930-970 975-1013"],
];
const px = (v) => 1350 + v / 3;
const spans = (s) => (s ? s.split(" ").map((t) => {
  const kind = /[a-z]/.test(t[0]) ? t[0] : "";
  const [a, b] = t.slice(kind.length).split("-").map(Number);
  return { kind, x: px(a), w: (b - a) / 3 };
}) : []);

const PatientRow = ({ row, bottom }) => {
  const [label, top, areas, marks, dots, upper, lower] = row;
  return (
    <g>
      {spans(areas).map((s) => <rect key={s.x} x={s.x} y={top} width={s.w} height={bottom - top} fill={AREA[s.kind]} />)}
      {spans(marks).map((s) => <rect key={s.x} x={s.x} y={top + 7.5} width={s.w} height={bottom - top - 7.5} fill={AREA[s.kind]} opacity=".85" />)}
      {spans(upper).map((s) => <rect key={s.x} x={s.x} y={top + 17.5} width={s.w} height="3.2" fill="#3d4045" />)}
      {spans(lower).map((s) => <rect key={s.x} x={s.x} y={top + 20.9} width={s.w} height="3.4" fill="#3d4045" />)}
      {dots.split(" ").map((v, i) => <ellipse key={i} cx={px(+v)} cy={top + 12.5} rx="1.7" ry="1.6" fill="#141414" />)}
      <text x="1472.6" y={top + 7} textAnchor="end" textLength={label.length * 3.35} stroke="#1c1c1c" strokeWidth=".12">{label}</text>
    </g>
  );
};

const TimelineChart = () => (
  <Chart width="422" height="531" viewBox="1383 61 422 531" fontSize="5.8">
    {PATIENTS.map((row, i) => (
      <PatientRow key={row[0]} row={row} bottom={i + 1 < PATIENTS.length ? PATIENTS[i + 1][1] : 568} />
    ))}
    <rect x="1773" y="229.5" width="4" height="4" fill="#e0182b" stroke="#7c1420" strokeWidth=".5" />
    <rect x="1575.5" y="442.5" width="3" height="15.5" fill="#f47c15" stroke="#a1520e" strokeWidth=".7" />
    {PATIENTS.slice(1).map(([label, y], i) => (
      <g key={label} strokeWidth=".9">
        <path d={`M1384 ${y}H${i > 10 ? 1671 : 1806}`} stroke={i > 10 ? "#a3c6d3" : "#8f8989"} opacity=".9" />
        {i > 10 && <path d={`M1671 ${y}H1806`} stroke="#8f8989" opacity=".8" />}
      </g>
    ))}
    <g fill="none" strokeDasharray="1.5 2.7">
      <path d="M1416.5 76V361M1523.2 76V361M1631.5 76V361M1739.5 76V580" stroke="#6f6969" />
      <path d="M1417.3 361V580M1523.8 361V580M1632.4 361V580" stroke="#8fbccb" />
    </g>
    <path d="M1472.7 73V361" stroke="#8f8b8b" />
    <path d="M1473.2 361V566" stroke="#9aa6ac" />
    <text x="1383.4" y="574.7" fontSize="8" textLength="89.5">We 2011.05.18 06:19:50 h</text>
    <path d="M1361 580H1806" stroke="#6f6b6b" strokeWidth="1.4" />
    <g fontSize="5" textAnchor="middle" stroke="#1c1c1c" strokeWidth=".1">
      <text x="1417.3" y="584.4">April</text>
      <text x="1524" y="584.4">July</text>
      <text x="1632.5" y="584.4">October</text>
      <text x="1739" y="584.4">2012</text>
    </g>
  </Chart>
);

const ViewTab = ({ title, height, inset }) => (
  <TabRow $height={height}>
    <Tab>{title} <TabClose>x</TabClose></Tab>
    {inset !== undefined && <WindowButtons $inset={inset}><WindowIcons /></WindowButtons>}
  </TabRow>
);
const ToolButtons = () => (
  <Buttons>
    <RoundButton />
    <ExportButton />
  </Buttons>
);

export default function App() {
  return (
    <>
      <GlobalStyle />
      <Workspace>
        <Column $width={314}>
          <Panel $height={244}>
            <ViewTab title="Epidemic Curve" height={9} />
            <Body $left={4} $right={6}>
              <Toolbar $height={19}>
                <ToolButtons />
                <Select>whole hospital <Arrow>▼</Arrow></Select>
              </Toolbar>
              <Frame $height={205}><EpidemicChart /></Frame>
            </Body>
            <Badge $x={279} $y={0} $w={33} $h={33} $lift={2}>(1)</Badge>
          </Panel>
          <Panel $height={343}>
            <ViewTab title="Contact Network View" height={10} />
            <Body $left={4} $right={6}>
              <Toolbar $height={36}>
                <ToolButtons />
                <ColorLegend items={[STATUS[0], STATUS[2], STATUS[3]]} offset={4} height={32} />
              </Toolbar>
              <Frame $height={286}><NetworkChart /></Frame>
            </Body>
            <Badge $x={276} $y={2} $w={32} $h={33} $lift={3}>(2)</Badge>
          </Panel>
        </Column>
        <Column $width={1033}>
          <Panel $height={588}>
            <ViewTab title="Transmission Pathway View" height={9} inset={3} />
            <Body $left={5} $right={7}>
              <Toolbar $height={36}>
                <ToolButtons />
                <ColorLegend items={STATUS} offset={4} height={32} />
                <ColorLegend items={SITES} offset={202} height={24} size={7.8} />
                <RefreshSlot><RefreshButton /></RefreshSlot>
              </Toolbar>
              <Frame $height={533}>
                <TimeStrip>Su 27.11.2011 18:43:10 Uhr</TimeStrip>
                <PathwayChart />
              </Frame>
            </Body>
            <Badge $x={950.5} $y={17} $w={38} $h={33} $lift={4}>(3)</Badge>
          </Panel>
        </Column>
        <Column $width={455} $pull={-2}>
          <Panel $height={588}>
            <ViewTab title="Patient Timeline View" height={9} inset={0} />
            <Body $left={6} $right={3}>
              <Toolbar $height={36}>
                <ToolButtons />
                <ColorLegend items={STATUS} offset={4} height={32} />
                <RefreshSlot><RefreshButton /></RefreshSlot>
              </Toolbar>
              <Frame $height={533} $direction="row">
                <SliderColumn><Track><Thumb /></Track></SliderColumn>
                <TimelineChart />
              </Frame>
            </Body>
            <Badge $x={387} $y={20} $w={35.5} $h={29} $size={25} $light>(4)</Badge>
          </Panel>
        </Column>
      </Workspace>
    </>
  );
}
